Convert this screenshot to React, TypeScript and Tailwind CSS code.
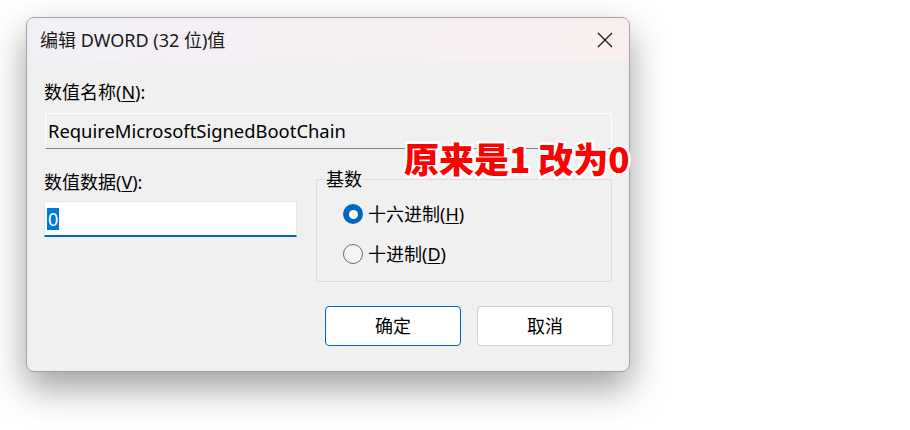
import React from "react";

const font = { fontFamily: '"Noto Sans", "Noto Sans CJK SC", sans-serif' };

function Radio({ checked, label, u }: { checked: boolean; label: string; u: string }) {
  return (
    <div className="flex items-center h-[24px]">
      {checked ? (
        <div className="w-[20px] h-[20px] rounded-full bg-[#0067c0] flex items-center justify-center">
          <div className="w-[9px] h-[9px] rounded-full bg-white" />
        </div>
      ) : (
        <div className="w-[20px] h-[20px] rounded-full border border-[#6b6b6b] bg-[#f5f5f5]" />
      )}
      <span className="ml-[5px] text-[18px] text-black leading-[24px]">
        {label}(<span className="underline underline-offset-2">{u}</span>)
      </span>
    </div>
  );
}

export default function App() {
  return (
    <div className="w-[910px] h-[430px] bg-white relative overflow-hidden" style={font}>
      <div className="pl-[26px] pt-[17px]">
        <div className="w-[604px] h-[355px] rounded-[8px] border border-[#a3a3a3] bg-[#f0f0f0] overflow-hidden shadow-[0_16px_36px_rgba(0,0,0,0.38)] flex flex-col">
          <div className="h-[43px] shrink-0 bg-gradient-to-r from-[#f2f0f7] to-[#f9efef] flex items-center pl-[13px] pr-[15px]">
            <span className="text-[18px] text-[#1a1a1a] leading-none">编辑 DWORD (32 位)值</span>
            <div className="ml-auto w-[18px] h-[18px] flex items-center justify-center">
              <svg width="16" height="16" viewBox="0 0 16 16">
                <path d="M1 1 L15 15 M15 1 L1 15" stroke="#1a1a1a" strokeWidth="1.3" fill="none" />
              </svg>
            </div>
          </div>
          <div className="flex flex-col pl-[17px] pr-[16px] pt-[19px]">
            <div className="text-[18px] leading-[24px] text-black">
              数值名称(<span className="underline underline-offset-2">N</span>):
            </div>
            <div className="mt-[9px] ml-[1px] w-[567px] h-[36px] border border-white border-b-[#808080] bg-[#f0f0f0] flex items-center pl-[2px]">
              <span className="text-[18.4px] text-black">RequireMicrosoftSignedBootChain</span>
            </div>
            <div className="flex mt-[19px]">
              <div className="w-[253px] flex flex-col">
                <div className="text-[18px] leading-[24px] text-black mt-[2px]">
                  数值数据(<span className="underline underline-offset-2">V</span>):
                </div>
                <div className="mt-[7px] w-[253px] h-[36px] bg-white border border-[#e6e6e6] border-b-2 border-b-[#0067c0] flex items-center pl-[2px]">
                  <span className="bg-[#0078d7] text-white text-[18px] leading-[22px] px-[1px]">0</span>
                </div>
              </div>
              <div className="ml-[19px] w-[296px] h-[103px] relative mt-[11px] border border-[#dcdcdc] pl-[26px] pt-[22px]">
                <div className="absolute left-[8px] top-[-13px] bg-[#f0f0f0] px-[1px] text-[18px] leading-[24px] text-black">基数</div>
                <Radio checked label="十六进制" u="H" />
                <div className="h-[16px]" />
                <Radio checked={false} label="十进制" u="D" />
              </div>
            </div>
            <div className="flex justify-end gap-[16px] mt-[24px] pr-[0px]">
              <div className="w-[136px] h-[40px] rounded-[4px] border border-[#0067c0] bg-white flex items-center justify-center text-[18px] text-black">确定</div>
              <div className="w-[136px] h-[40px] rounded-[4px] border border-[#d0d0d0] bg-white flex items-center justify-center text-[18px] text-black">取消</div>
            </div>
          </div>
        </div>
      </div>
      <div
        className="absolute left-[404px] top-[135px] text-[35px] font-black text-[#ff0000] leading-[46px] whitespace-nowrap [-webkit-text-stroke:5px_white] [paint-order:stroke_fill]"
        style={{ fontFamily: '"Noto Sans CJK SC", "Noto Sans", sans-serif' }}
      >
        原来是1 改为0
      </div>
    </div>
  );
}
